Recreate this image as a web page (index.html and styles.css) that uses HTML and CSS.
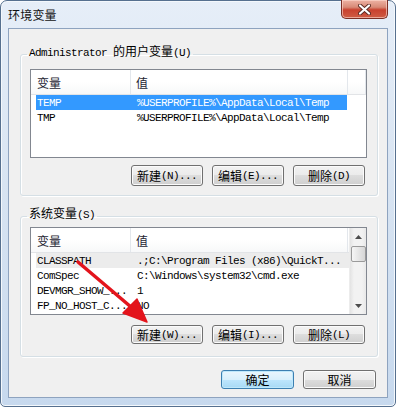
FILE: index.html
```html
<!DOCTYPE html>
<html lang="zh-CN">
<head>
  <meta charset="UTF-8">
  <title>环境变量</title>
  <link rel="stylesheet" href="styles.css">
</head>
<body>
  <div class="window">
    <div class="titlebar">
      <span class="title">环境变量</span>
      <button class="close" type="button">
        <svg width="13" height="11" viewBox="0 0 13 11">
          <path d="M2 1.5 L11 9.5 M11 1.5 L2 9.5" stroke="#5a2a22" stroke-width="4" stroke-linecap="round"/>
          <path d="M2 1.5 L11 9.5 M11 1.5 L2 9.5" stroke="#ffffff" stroke-width="2.2" stroke-linecap="round"/>
        </svg>
      </button>
    </div>

    <div class="client">
      <fieldset class="group group-user">
        <legend>Administrator <span class="zh">的用户变量</span>(U)</legend>
        <div class="list list-user">
          <div class="list-body">
            <div class="list-head">
              <span class="head-cell"><span class="zh">变量</span></span>
              <span class="head-cell"><span class="zh">值</span></span>
              <span class="head-cell"></span>
            </div>
            <div class="row selected"><span>TEMP</span><span>%USERPROFILE%\AppData\Local\Temp</span></div>
            <div class="row"><span>TMP</span><span>%USERPROFILE%\AppData\Local\Temp</span></div>
          </div>
        </div>
        <div class="buttons buttons-user">
          <button class="btn" type="button"><span class="zh">新建</span>(N)...</button>
          <button class="btn" type="button"><span class="zh">编辑</span>(E)...</button>
          <button class="btn" type="button"><span class="zh">删除</span>(D)</button>
        </div>
      </fieldset>

      <fieldset class="group group-system">
        <legend><span class="zh">系统变量</span>(S)</legend>
        <div class="list list-system">
          <div class="list-body">
            <div class="list-head">
              <span class="head-cell"><span class="zh">变量</span></span>
              <span class="head-cell"><span class="zh">值</span></span>
            </div>
            <div class="row inactive"><span>CLASSPATH</span><span>.;C:\Program Files (x86)\QuickT...</span></div>
            <div class="row"><span>ComSpec</span><span>C:\Windows\system32\cmd.exe</span></div>
            <div class="row"><span>DEVMGR_SHOW_...</span><span>1</span></div>
            <div class="row"><span>FP_NO_HOST_C...</span><span>NO</span></div>
          </div>
          <div class="scrollbar">
            <div class="sb-arrow">
              <svg width="7" height="4" viewBox="0 0 7 4"><path d="M0 4 L3.5 0 L7 4 Z" fill="#4d4d4d"/></svg>
            </div>
            <div class="sb-thumb"></div>
            <div class="sb-track"></div>
            <div class="sb-arrow">
              <svg width="7" height="4" viewBox="0 0 7 4"><path d="M0 0 L7 0 L3.5 4 Z" fill="#4d4d4d"/></svg>
            </div>
          </div>
        </div>
        <div class="buttons buttons-system">
          <button class="btn" type="button"><span class="zh">新建</span>(W)...</button>
          <button class="btn" type="button"><span class="zh">编辑</span>(I)...</button>
          <button class="btn" type="button"><span class="zh">删除</span>(L)</button>
        </div>
      </fieldset>

      <div class="dialog-buttons">
        <button class="btn btn-wide default" type="button"><span class="zh">确定</span></button>
        <button class="btn btn-wide" type="button"><span class="zh">取消</span></button>
      </div>
    </div>
  </div>

  <!-- red annotation arrow drawn over the dialog -->
  <svg class="arrow" width="396" height="407" viewBox="0 0 396 407">
    <path d="M78 262 L131 307" stroke="#e3141c" stroke-width="3.5" stroke-linecap="round"/>
    <path d="M147 322 L123 313 L137 299 Z" fill="#e3141c" stroke="#e3141c" stroke-width="1.5" stroke-linejoin="round"/>
  </svg>
</body>
</html>
```

FILE: styles.css
```css
* {
  margin: 0;
  padding: 0;
  box-sizing: border-box;
}
body {
  position: relative;
  width: 396px;
  height: 407px;
  overflow: hidden;
  background: #ffffff;
  font-family: "Liberation Mono", "Noto Sans CJK SC", monospace;
  font-size: 11px;
  letter-spacing: -0.6px;
  color: #000;
}
.zh {
  font-family: "Noto Sans CJK SC", sans-serif;
  font-size: 12px;
  letter-spacing: 0;
}
.window {
  width: 396px;
  height: 407px;
  display: flex;
  flex-direction: column;
  padding: 0 7px 8px;
  border: 1px solid #56708f;
  border-radius: 7px 7px 5px 5px;
  background: linear-gradient(#e6eef8, #d8e4f2 45%, #c7d9ee);
  box-shadow: inset 0 0 0 1px #f4f8fc;
}
.titlebar {
  height: 27px;
  display: flex;
  justify-content: space-between;
  align-items: flex-start;
}
.title {
  padding-top: 5px;
  line-height: 17px;
  font-family: "Noto Sans CJK SC", sans-serif;
  font-size: 12px;
  letter-spacing: 0.2px;
  color: #111;
}
.close {
  width: 47px;
  height: 19px;
  margin-top: -1px;
  display: flex;
  align-items: center;
  justify-content: center;
  border: 1px solid #7b2f25;
  border-top: none;
  border-radius: 0 0 5px 5px;
  background: linear-gradient(#eeb3a4, #d88a77 40%, #c9412e 55%, #cf5c44);
  box-shadow: inset 0 0 0 1px rgba(255, 220, 210, 0.6);
}
.client {
  flex: 1;
  display: flex;
  flex-direction: column;
  padding: 15px 9px 0 11px;
  background: #f0f0f0;
  border: 1px solid #8ea3bf;
}
.group {
  border: 1px solid #d5dfe5;
  border-radius: 3px;
  padding: 5px 10px 9px 9px;
  box-shadow: inset 1px 1px #ffffff, 1px 1px #ffffff;
}
.group legend {
  margin-left: -3px;
  padding: 0 2px 4px;
  line-height: 14px;
}
.group-system {
  margin-top: 10px;
  padding-top: 1px;
  padding-bottom: 12px;
}
.list {
  display: flex;
  overflow: hidden;
  background: #ffffff;
  border: 1px solid #828790;
}
.list-user {
  height: 89px;
}
.list-system {
  height: 88px;
}
.list-body {
  flex: 1;
  overflow: hidden;
}
.list-head {
  height: 25px;
  display: grid;
  grid-template-columns: 100px 217px 1fr;
  background: linear-gradient(#ffffff, #ffffff 50%, #f7f8f9);
  border-bottom: 1px solid #e2e4e7;
}
.head-cell {
  display: flex;
  align-items: center;
  padding-left: 5px;
  border-right: 1px solid #e3e7ec;
  color: #1e2533;
}
.head-cell:first-child {
  padding-left: 6px;
}
.row {
  height: 15px;
  margin-left: 5px;
  display: grid;
  grid-template-columns: 100px 1fr;
  align-items: center;
  white-space: nowrap;
  overflow: hidden;
}
.list-user .row {
  width: 311px;
}
.row span {
  padding-left: 1px;
  overflow: hidden;
}
.row.selected {
  background: #3399ff;
  color: #ffffff;
}
.row.inactive {
  background: #ececec;
}
.scrollbar {
  width: 17px;
  display: flex;
  flex-direction: column;
  background: linear-gradient(to right, #e3e3e3, #f2f2f2 25%, #f2f2f2 75%, #e8e8e8);
  border-left: 1px solid #ececec;
}
.sb-arrow {
  height: 17px;
  display: flex;
  align-items: center;
  justify-content: center;
}
.sb-thumb {
  height: 16px;
  margin: 1px 0 0 1px;
  width: 15px;
  border: 1px solid #9a9a9a;
  border-radius: 2px;
  background: linear-gradient(to right, #f6f6f6, #e6e6e6 50%, #d6d6d6);
}
.sb-track {
  flex: 1;
}
.buttons {
  display: flex;
  justify-content: flex-end;
  gap: 9px;
  padding-right: 2px;
}
.buttons-user {
  margin-top: 7px;
}
.buttons-system {
  margin-top: 10px;
}
.btn {
  width: 72px;
  height: 21px;
  display: flex;
  align-items: center;
  justify-content: center;
  border: 1px solid #707070;
  border-radius: 3px;
  background: linear-gradient(#f2f2f2, #ebebeb 50%, #dddddd 50%, #cfcfcf);
  box-shadow: inset 0 0 0 1px #fbfbfb;
  font: inherit;
  letter-spacing: inherit;
  color: #000;
}
.buttons-system .btn {
  height: 19px;
}
.dialog-buttons {
  margin-top: 13px;
  display: flex;
  justify-content: flex-end;
  gap: 9px;
  padding-right: 2px;
}
.btn-wide {
  width: 73px;
  height: 19px;
}
.btn.default {
  border-color: #3c7fb1;
  background: linear-gradient(#eaf6fd, #d9f0fc 50%, #bee6fd 50%, #a7d9f5);
  box-shadow: inset 0 0 0 1px #bfe8fb;
}
.arrow {
  position: absolute;
  top: 0;
  left: 0;
  pointer-events: none;
}
```
